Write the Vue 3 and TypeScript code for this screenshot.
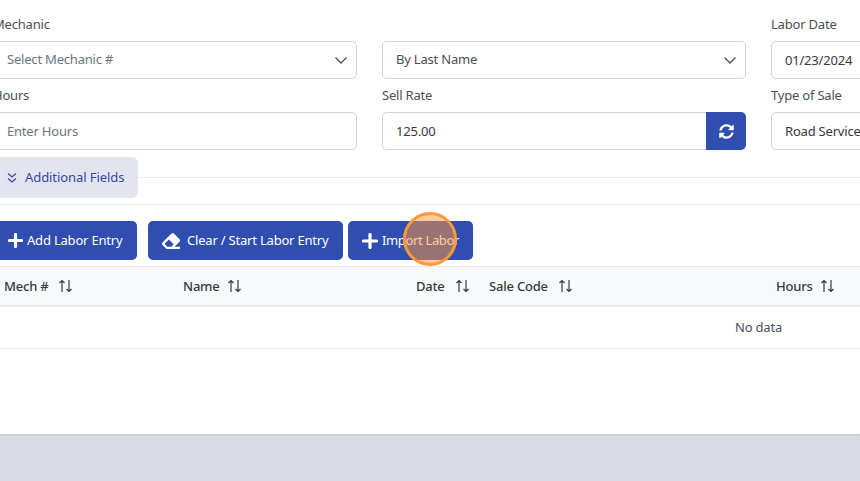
<script setup lang="ts">
const columns = [
  { label: 'Mech #', width: 179, gap: 9 },
  { label: 'Name', width: 233, gap: 7 },
  { label: 'Date', width: 73, gap: 10 },
  { label: 'Sale Code', width: 287, gap: 10 },
  { label: 'Hours', width: 100, gap: 7 },
]
</script>

<template>
  <div class="page">
    <div class="card">
      <div class="form">
        <div class="row">
          <div class="field">
            <label>Mechanic</label>
            <div class="control select">
              <span class="muted">Select Mechanic #</span>
              <svg class="chev" width="14" height="14" viewBox="0 0 14 14"><path d="M1.5 4.500 7 10l5.500-5.500" fill="none" stroke="#495057" stroke-width="1.300" /></svg>
            </div>
          </div>
          <div class="field">
            <label>&nbsp;</label>
            <div class="control select">
              <span class="dark">By Last Name</span>
              <svg class="chev" width="14" height="14" viewBox="0 0 14 14"><path d="M1.5 4.500 7 10l5.500-5.500" fill="none" stroke="#495057" stroke-width="1.300" /></svg>
            </div>
          </div>
          <div class="field">
            <label>Labor Date</label>
            <div class="control"><span class="value">01/23/2024</span></div>
          </div>
        </div>
        <div class="row">
          <div class="field">
            <label>Hours</label>
            <div class="control"><span class="muted">Enter Hours</span></div>
          </div>
          <div class="field">
            <label>Sell Rate</label>
            <div class="group">
              <div class="control grow"><span class="value">125.00</span></div>
              <div class="refresh">
                <svg width="15" height="15" viewBox="0 0 512 512"><path fill="#fff" d="M370.7 133.3C339.5 104 298.9 88 255.800 88c-77.500.1-144.300 53.200-162.800 126.900-1.300 5.400-6.100 9.200-11.700 9.200H24.100c-7.500 0-13.200-6.800-11.800-14.200C33.900 94.900 134.800 8 256 8c66.400 0 126.800 26.100 171.300 68.700L463 41c15.100-15.100 41-4.400 41 17v134c0 13.300-10.700 24-24 24H346c-21.400 0-32.100-25.900-17-41l41.700-41.700zM32 296h134c21.400 0 32.100 25.900 17 41l-41.700 41.700c31.200 29.300 71.800 45.300 114.900 45.300 77.400-.1 144.300-53.100 162.800-126.800 1.300-5.400 6.100-9.200 11.700-9.200h57.300c7.500 0 13.200 6.800 11.800 14.200C478.100 417.100 377.200 504 256 504c-66.400 0-126.800-26.100-171.300-68.700L49 471c-15.100 15.100-41 4.400-41-17V320c0-13.300 10.700-24 24-24z" /></svg>
              </div>
            </div>
          </div>
          <div class="field">
            <label>Type of Sale</label>
            <div class="control"><span class="value nowrap">Road Service</span></div>
          </div>
        </div>
      </div>

      <div class="divider-row">
        <button class="toggle">
          <svg width="12" height="12" viewBox="0 0 12 12"><path d="M2 1.500l4 3.500 4-3.500M2 6.500 6 10l4-3.500" fill="none" stroke="#3248a8" stroke-width="1.300" /></svg>
          <span class="lift">Additional Fields</span>
        </button>
      </div>

      <div class="actions">
        <button class="btn first">
          <svg width="15" height="15" viewBox="0 0 15 15"><path d="M7.500 1.500v12M1.500 7.500h12" stroke="#fff" stroke-width="3.200" stroke-linecap="round" /></svg>
          <span class="lift">Add Labor Entry</span>
        </button>
        <button class="btn second">
          <svg width="18" height="18" viewBox="0 0 512 512"><path fill="#fff" d="M497.941 273.941c18.745-18.745 18.745-49.137 0-67.882l-160-160c-18.745-18.745-49.137-18.745-67.882 0l-256 256c-18.745 18.745-18.745 49.137 0 67.882l96 96A48.004 48.004 0 0 0 144 480h356c6.627 0 12-5.373 12-12v-40c0-6.627-5.373-12-12-12H355.883l142.058-142.059zm-302.627-62.627l137.373 137.373L265.373 416H150.628l-80-80 124.686-124.686z" /></svg>
          <span class="lift">Clear / Start Labor Entry</span>
        </button>
        <button class="btn third">
          <svg width="16" height="16" viewBox="0 0 16 16"><path d="M8 1.500v13M1.500 8h13" stroke="#fff" stroke-width="3.200" stroke-linecap="round" /></svg>
          <span class="lift tight">Import Labor</span>
        </button>
        <div class="pointer"></div>
      </div>

      <div class="thead">
        <div v-for="col in columns" :key="col.label" class="th" :style="{ width: col.width + 'px', gap: col.gap + 'px' }">
          <span>{{ col.label }}</span>
          <svg width="15" height="14" viewBox="0 0 15 14"><path d="M4 13V1.500M1.500 4 4 1.500 6.500 4M11 1v11.500M8.500 10l2.500 2.500 2.500-2.500" fill="none" stroke="#343a40" stroke-width="1.200" /></svg>
        </div>
      </div>
      <div class="tbody"><span>No data</span></div>
    </div>
  </div>
</template>

<style>
html, body { margin: 0; background: #d9d9e5; overflow: hidden; }
</style>

<style scoped>
.page {
  width: 860px;
  height: 481px;
  overflow: hidden;
  background: #d9d9e5;
  font-family: "Noto Sans", "Open Sans", sans-serif;
  font-size: 13px;
  letter-spacing: -0.2px;
  color: #343a40;
}
.card {
  width: 860px;
  height: 434px;
  background: #fff;
  box-shadow: 0 1px 2px rgba(0,0,0,.1);
  overflow: hidden;
}
.form { padding-top: 16px; margin-left: -7px; width: 1142px; display: flex; flex-direction: column; gap: 8px; }
.row { display: flex; gap: 25px; }
.field { display: flex; flex-direction: column; flex: none; width: 364px; }
.field label { height: 25px; line-height: 17px; color: #495057; white-space: nowrap; }
.control {
  box-sizing: border-box;
  height: 38px;
  border: 1px solid #ced4da;
  border-radius: 5px;
  padding: 0 8px 0 13px;
  display: flex;
  align-items: center;
  justify-content: space-between;
  background: #fff;
}
.select span { position: relative; top: -1px; }
.lift { position: relative; top: -1px; }
.tight { letter-spacing: -0.35px; }
.muted { color: #6c757d; }
.dark { color: #495057; }
.value { color: #343a40; }
.nowrap { white-space: nowrap; }
.chev { flex: none; }
.group { display: flex; }
.grow { flex: 1; border-radius: 5px 0 0 5px; border-right: 0; }
.refresh {
  width: 40px;
  height: 38px;
  background: #304db0;
  border-radius: 0 5px 5px 0;
  display: flex;
  align-items: center;
  justify-content: center;
}
.divider-row {
  margin-top: 7px;
  height: 48px;
  box-sizing: border-box;
  border-bottom: 1px solid #e9ecef;
  background: linear-gradient(#e9ecef, #e9ecef) 0 20px / 100% 1px no-repeat;
}
.toggle {
  box-sizing: border-box;
  height: 41px;
  width: 138px;
  margin: 0;
  padding: 0 0 0 6px;
  border: 0;
  border-radius: 0 6px 6px 0;
  background: #e2e5f0;
  color: #3248a8;
  font: inherit;
  letter-spacing: -0.08px;
  display: flex;
  align-items: center;
  gap: 7px;
}
.actions {
  display: flex;
  align-items: flex-end;
  height: 61px;
  position: relative;
  padding-bottom: 6px;
  box-sizing: border-box;
}
.btn {
  box-sizing: border-box;
  height: 39px;
  border: 0;
  border-radius: 5px;
  background: #304db0;
  color: #fff;
  font: inherit;
  letter-spacing: inherit;
  display: flex;
  align-items: center;
  justify-content: flex-start;
  gap: 4px;
  padding: 0;
  white-space: nowrap;
}
.first { width: 137px; padding-left: 8px; border-radius: 0 5px 5px 0; }
.second { width: 195px; margin-left: 11px; padding-left: 14px; gap: 7px; }
.third { width: 125px; margin-left: 5px; padding-left: 14px; }
.pointer {
  position: absolute;
  left: 403px;
  top: 7px;
  width: 48px;
  height: 48px;
  border: 3px solid #ff9838;
  border-radius: 50%;
  background: rgba(255, 152, 56, .5);
}
.thead {
  display: flex;
  align-items: center;
  height: 41px;
  box-sizing: border-box;
  background: #f8f9fa;
  border-top: 1px solid #e9ecef;
  border-bottom: 2px solid #e9ecef;
  padding-left: 4px;
  width: 900px;
}
.th {
  display: flex;
  align-items: center;
  font-weight: 500;
  color: #343a40;
  flex: none;
}
.tbody {
  height: 42px;
  box-sizing: border-box;
  border-bottom: 1px solid #e9ecef;
  display: flex;
  align-items: center;
  padding: 0 0 2px 735px;
  color: #495057;
}
</style>
